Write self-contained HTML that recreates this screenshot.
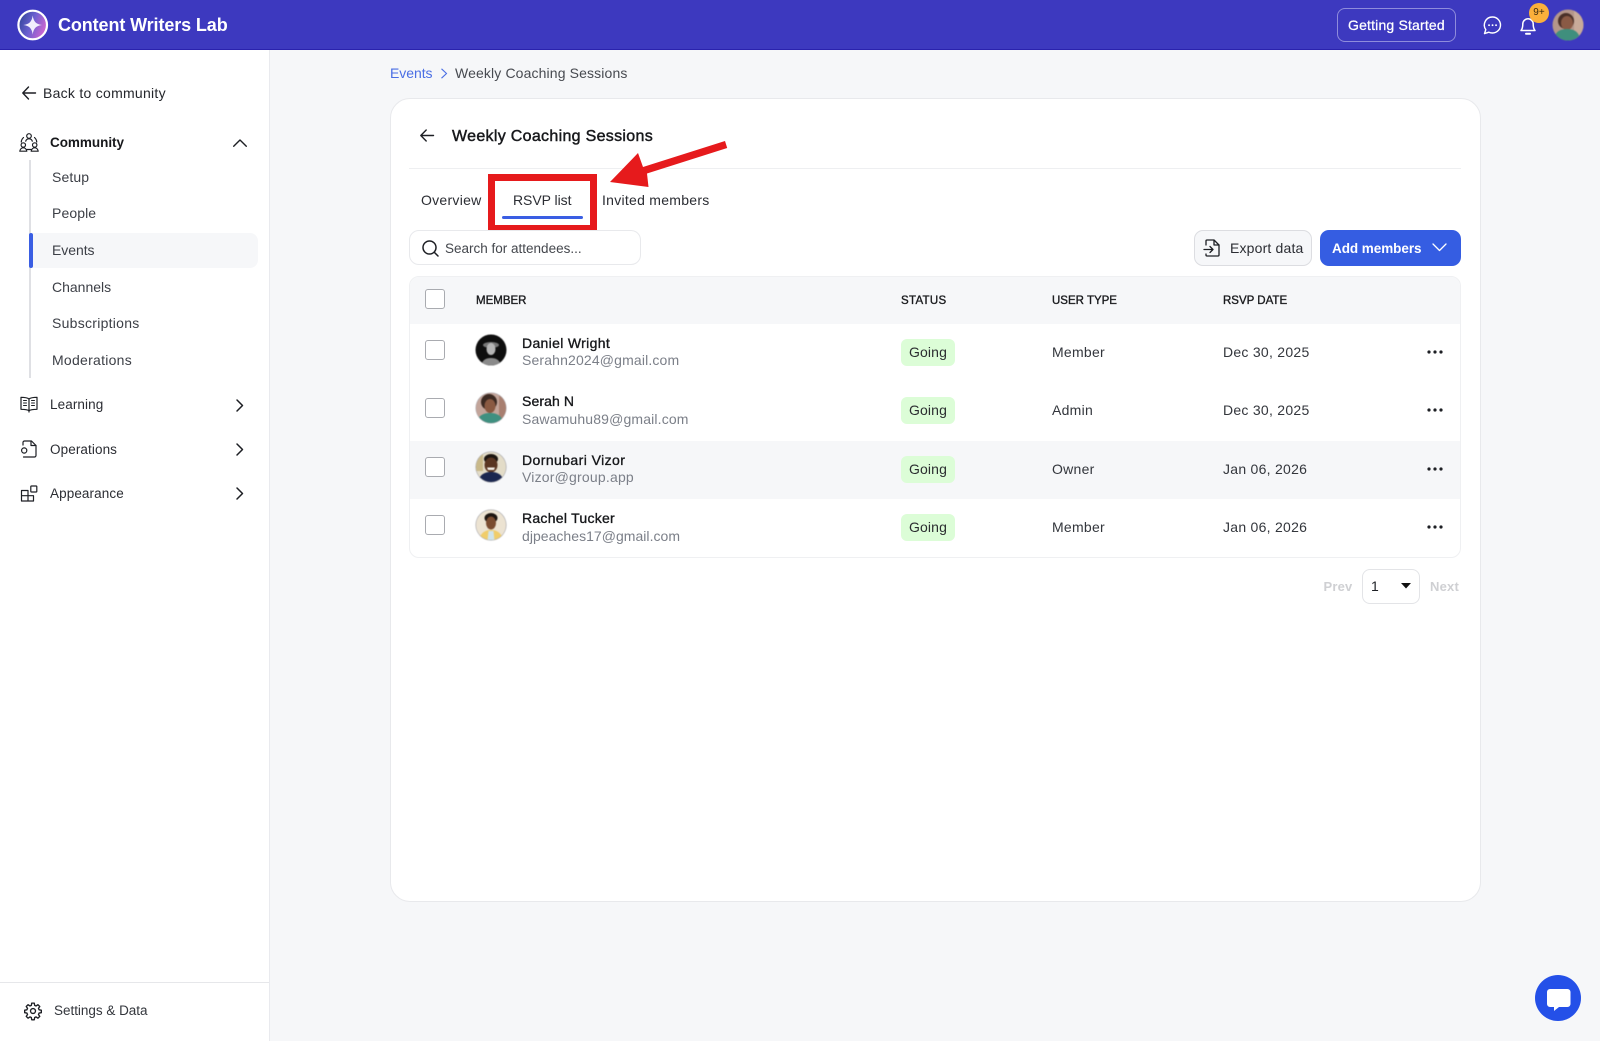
<!DOCTYPE html>
<html lang="en"><head><meta charset="utf-8"><title>Weekly Coaching Sessions</title>
<style>
*{box-sizing:border-box}
html,body{margin:0;padding:0;width:1600px;height:1041px;overflow:hidden;background:#f6f7f9;font-family:"Liberation Sans",sans-serif;color:#24262b}
.a{position:absolute}
.t{position:absolute;white-space:nowrap;line-height:20px;font-size:14px;letter-spacing:.27px}
svg{position:absolute;overflow:visible}
.ic{fill:none;stroke:#1d1f24;stroke-width:1.4;stroke-linecap:round;stroke-linejoin:round}
.cb{position:absolute;left:425px;width:20px;height:20px;border:1.6px solid #a9abb0;border-radius:3px;background:#fff}
.go{position:absolute;left:901px;width:54px;height:27px;background:#dcfdd7;border-radius:6px;font-size:14px;line-height:27px;text-align:center;letter-spacing:.15px;color:#2b2d30}
.nm{color:#17181b;-webkit-text-stroke:.35px #17181b}
.em{color:#7b7f88;letter-spacing:.15px}
.th{font-size:11.5px;color:#1a1b1e;-webkit-text-stroke:.35px #1a1b1e;letter-spacing:0}
.nav{color:#3c3f46}
.side{color:#2b2d33;font-size:13.5px;letter-spacing:.1px}
.av{filter:blur(.5px)}
</style></head><body>

<!-- header -->
<div class="a" style="left:0;top:0;width:1600px;height:50px;background:#3d39bf;border-bottom:1px solid #2a22ad"></div>
<svg style="left:0;top:0" width="70" height="50">
<defs><linearGradient id="lg" x1="0" y1="0" x2="1" y2=".4"><stop offset="0" stop-color="#27408f"/><stop offset=".55" stop-color="#6a5fd0"/><stop offset="1" stop-color="#c565d0"/></linearGradient></defs>
<circle cx="32.7" cy="25" r="14.3" fill="url(#lg)" stroke="#fff" stroke-width="2.2"/>
<path d="M32.7 15.5C33.5 21.5 36 24.2 42 25 36 25.8 33.5 28.5 32.7 34.5 31.9 28.5 29.4 25.8 23.4 25 29.4 24.2 31.9 21.5 32.7 15.500Z" fill="#f1eefc"/>
</svg>
<div class="t" style="left:58px;top:15px;font-size:18px;font-weight:700;color:#fff;letter-spacing:-.11px">Content Writers Lab</div>
<div class="a" style="left:1337px;top:8px;width:119px;height:34px;border:1px solid #8f8cdc;border-radius:8px"></div>
<div class="t" style="left:1348px;top:15px;color:#fff;font-size:14px;-webkit-text-stroke:.25px #fff;letter-spacing:.18px">Getting Started</div>
<svg style="left:1482px;top:15px" width="22" height="22" fill="none" stroke="#fff" stroke-width="1.4" stroke-linecap="round" stroke-linejoin="round"><path d="M10.500 2a8 8 0 0 1 0 16 8.200 8.200 0 0 1-3.600-.8L2.500 18.600l1.300-4A8 8 0 0 1 10.500 2Z"/><path d="M7 10.200h.1M10.500 10.200h.1M14 10.200h.1" stroke-width="1.800"/></svg>
<svg style="left:1519px;top:15px" width="18" height="22" fill="none" stroke="#fff" stroke-width="1.5" stroke-linecap="round" stroke-linejoin="round"><path d="M2 15.500c1.300-1.500 1.800-3 1.800-6.500a5.200 5.200 0 0 1 10.400 0c0 3.500.5 5 1.800 6.500Z"/><path d="M7 18.800h4" stroke-width="2"/></svg>
<div class="a" style="left:1529px;top:3px;width:20px;height:20px;border-radius:50%;background:#fbb03b;color:#3a2a10;font-size:10px;line-height:20px;text-align:center">9+</div>
<svg class="av" style="left:1552px;top:9px" width="32" height="32"><defs><clipPath id="c0"><circle cx="16" cy="16" r="15.500"/></clipPath></defs><g clip-path="url(#c0)"><rect width="32" height="32" fill="#b4968a"/><rect x="22" width="10" height="32" fill="#c8ab9a"/><circle cx="14" cy="12" r="8" fill="#4a3028"/><ellipse cx="15" cy="14" rx="6" ry="7" fill="#8a5a45"/><path d="M2 32c0-9 6-12 13-12s13 3 13 12Z" fill="#3f8f7d"/></g></svg>

<!-- sidebar -->
<div class="a" style="left:0;top:50px;width:270px;height:991px;background:#fff;border-right:1px solid #e9eaee"></div>
<svg class="ic" style="left:22px;top:86px" width="14" height="14" viewBox="0 0 14 14"><path d="M13.500 7H1M6.500 1 .8 7l5.700 6"/></svg>
<div class="t" style="left:43px;top:83px">Back to community</div>

<svg class="ic" style="left:19px;top:132px;stroke-width:1.200" width="20" height="21" viewBox="0 0 20 21"><circle cx="10" cy="4" r="2.300"/><path d="M6.700 9.200c.4-1.500 1.700-2.400 3.300-2.400s2.900.9 3.300 2.400"/><circle cx="4.300" cy="13" r="2.200"/><circle cx="15.700" cy="13" r="2.200"/><path d="M.8 19.200c.3-2 1.700-3.400 3.500-3.400s3.200 1.400 3.500 3.400H.8ZM12.200 19.200c.3-2 1.700-3.400 3.500-3.400s3.200 1.400 3.500 3.400h-7Z"/><path d="M4.500 5.500C3 7 2.300 8.500 2.300 10M15.500 5.500c1.500 1.500 2.200 3 2.200 4.500M8 17.500h4"/></svg>
<div class="t" style="left:50px;top:133px;font-weight:700;color:#17181b;font-size:13.500px;letter-spacing:-.03px">Community</div>
<svg class="ic" style="left:233px;top:139px" width="14" height="8" viewBox="0 0 14 8"><path d="M.7 7.300 7 1l6.300 6.300"/></svg>

<div class="a" style="left:29px;top:160px;width:2px;height:218px;background:#dfe0e4"></div>
<div class="a" style="left:33px;top:233px;width:225px;height:35px;background:#f6f7f9;border-radius:0 8px 8px 0"></div>
<div class="a" style="left:28.500px;top:233px;width:4.500px;height:35px;background:#3a5ee3;border-radius:2px"></div>
<div class="t nav" style="left:52px;top:167px;letter-spacing:.1px">Setup</div>
<div class="t nav" style="left:52px;top:203px;letter-spacing:.1px">People</div>
<div class="t nav" style="left:52px;top:240px;letter-spacing:-.05px">Events</div>
<div class="t nav" style="left:52px;top:277px;letter-spacing:0">Channels</div>
<div class="t nav" style="left:52px;top:313px">Subscriptions</div>
<div class="t nav" style="left:52px;top:350px">Moderations</div>

<svg class="ic" style="left:20px;top:396px;stroke-width:1.200" width="18" height="17" viewBox="0 0 18 17"><path d="M9 3C7.500 1.700 4 1.300 1 1.300v12c3 0 6.500.3 8 1.500 1.500-1.200 5-1.500 8-1.500v-12C14 1.300 10.500 1.700 9 3ZM9 3v13"/><path d="M3.500 4.500h3M3.500 7h3M3.500 9.500h3M11.500 4.500h3M11.500 7h3M11.500 9.500h3" stroke-width="1"/></svg>
<div class="t side" style="left:50px;top:395px">Learning</div>
<svg class="ic" style="left:236px;top:399px;stroke-width:1.500" width="8" height="13" viewBox="0 0 8 13"><path d="M1 1l5.500 5.500L1 12"/></svg>

<svg class="ic" style="left:20px;top:440px;stroke-width:1.200" width="18" height="18" viewBox="0 0 18 18"><path d="M3 5V2.500C3 1.700 3.700 1 4.500 1h7L16 5.500v10c0 .8-.7 1.500-1.500 1.500H3.500"/><path d="M11 1.200V5.500h5"/><circle cx="4.200" cy="10.500" r="2.600"/></svg>
<div class="t side" style="left:50px;top:439.500px">Operations</div>
<svg class="ic" style="left:236px;top:443px;stroke-width:1.500" width="8" height="13" viewBox="0 0 8 13"><path d="M1 1l5.500 5.500L1 12"/></svg>

<svg class="ic" style="left:20px;top:485px;stroke-width:1.200" width="18" height="17" viewBox="0 0 18 17"><path d="M1.500 5.500h6.500V16H1.500ZM1.500 10.700h12V16H8"/><rect x="10.800" y="1" width="6" height="6" rx=".7"/></svg>
<div class="t side" style="left:50px;top:484px">Appearance</div>
<svg class="ic" style="left:236px;top:487px;stroke-width:1.500" width="8" height="13" viewBox="0 0 8 13"><path d="M1 1l5.500 5.500L1 12"/></svg>

<div class="a" style="left:0;top:982px;width:269px;height:1px;background:#e6e7ea"></div>
<svg class="ic" style="left:24px;top:1002px;stroke-width:1.800" width="18" height="18" viewBox="0 0 24 24"><circle cx="12" cy="12" r="3.300"/><path d="M10.300 1.500h3.400l.5 3 1.900.8 2.500-1.700 2.400 2.400-1.700 2.500.8 1.900 3 .5v3.400l-3 .5-.8 1.900 1.700 2.500-2.400 2.400-2.500-1.700-1.900.8-.5 3h-3.400l-.5-3-1.900-.8-2.500 1.700-2.400-2.400 1.700-2.500-.8-1.900-3-.5v-3.400l3-.5.8-1.900-1.700-2.500 2.400-2.400 2.500 1.700 1.900-.8Z"/></svg>
<div class="t" style="left:54px;top:1001px;color:#33363c;font-size:13.500px;letter-spacing:-.02px">Settings &amp; Data</div>

<!-- breadcrumb -->
<div class="t" style="left:390px;top:63px;color:#4a6ee4;letter-spacing:-.05px">Events</div>
<svg style="left:441px;top:68px" width="7" height="11" fill="none" stroke="#4a6ee4" stroke-width="1.100"><path d="M.5 .8 5.500 5.500 .5 10.200"/></svg>
<div class="t" style="left:455px;top:63px;color:#474a50;letter-spacing:.13px">Weekly Coaching Sessions</div>

<!-- card -->
<div class="a" style="left:390px;top:98px;width:1091px;height:804px;background:#fff;border:1px solid #e8e9ec;border-radius:20px"></div>
<svg class="ic" style="left:420px;top:129px" width="14" height="13" viewBox="0 0 14 13"><path d="M13.500 6.500H1M6.200 1 .8 6.500 6.200 12"/></svg>
<div class="t" style="left:452px;top:126.500px;font-size:16px;color:#17181b;-webkit-text-stroke:.45px #17181b;letter-spacing:.31px">Weekly Coaching Sessions</div>
<div class="a" style="left:409px;top:168px;width:1052px;height:1px;background:#eeeff1"></div>

<div class="t" style="left:421px;top:190px;color:#2b2d33">Overview</div>
<div class="t" style="left:513px;top:190px;color:#2b2d33;letter-spacing:-.05px">RSVP list</div>
<div class="t" style="left:602px;top:190px;color:#2b2d33">Invited members</div>
<div class="a" style="left:502px;top:216px;width:81px;height:3px;border-radius:2px;background:#3a5ee3"></div>
<div class="a" style="left:488px;top:174px;width:109px;height:58px;border:7px solid #e61a1c"></div>
<svg style="left:600px;top:135px" width="135" height="60"><path d="M10 47 38 18 43 32 125 6 127.200 13 47 38.500 48.500 52Z" fill="#e61a1c"/></svg>

<!-- toolbar -->
<div class="a" style="left:409px;top:230px;width:232px;height:35px;background:#fff;border:1px solid #e8e9ec;border-radius:10px"></div>
<svg class="ic" style="left:422px;top:240px;stroke-width:1.500" width="17" height="17" viewBox="0 0 17 17"><circle cx="7.500" cy="7.500" r="6.500"/><path d="M12.500 12.500 16 16"/></svg>
<div class="t" style="left:445px;top:239px;color:#44474d;font-size:13.500px;letter-spacing:0">Search for attendees...</div>
<div class="a" style="left:1194px;top:230px;width:118px;height:36px;background:#f6f7f9;border:1px solid #dcdde1;border-radius:9px"></div>
<svg class="ic" style="left:1203px;top:239px;stroke-width:1.300" width="18" height="18" viewBox="0 0 18 18"><path d="M3 6V2c0-.6.500-1 1-1h7l5 5v10c0 .6-.5 1-1 1H4c-.5 0-1-.4-1-1v-1"/><path d="M11 1.200V6h5M1 10.500h9M7 7.500l3 3-3 3"/></svg>
<div class="t" style="left:1230px;top:238px;color:#2b2d33;letter-spacing:.17px">Export data</div>
<div class="a" style="left:1320px;top:230px;width:141px;height:36px;background:#355de2;border-radius:9px"></div>
<div class="t" style="left:1332px;top:239px;color:#fff;font-weight:700;font-size:13.500px;letter-spacing:-.05px">Add members</div>
<svg style="left:1432px;top:243px" width="15" height="9" fill="none" stroke="#fff" stroke-width="1.300" stroke-linecap="round" stroke-linejoin="round"><path d="M1 1l6.500 6.500L14 1"/></svg>

<!-- table -->
<div class="a" style="left:409px;top:276px;width:1052px;height:282px;background:#fff;border:1px solid #eff0f2;border-radius:10px;overflow:hidden">
<div class="a" style="left:0;top:0;width:100%;height:47px;background:#f6f7f9"></div>
<div class="a" style="left:0;top:164px;width:100%;height:58px;background:#f6f7f9"></div>
</div>
<div class="t th" style="left:476px;top:291px">MEMBER</div>
<div class="t th" style="left:901px;top:291px;letter-spacing:.3px">STATUS</div>
<div class="t th" style="left:1052px;top:291px">USER TYPE</div>
<div class="t th" style="left:1223px;top:291px">RSVP DATE</div>
<div class="cb" style="top:289px"></div>
<div class="cb" style="top:340px"></div>
<div class="cb" style="top:398px"></div>
<div class="cb" style="top:457px"></div>
<div class="cb" style="top:515px"></div>

<svg class="av" style="left:475px;top:334px" width="32" height="32"><defs><clipPath id="c1"><circle cx="16" cy="16" r="15.500"/></clipPath></defs><g clip-path="url(#c1)"><rect width="32" height="32" fill="#0e0e0e"/><ellipse cx="16" cy="11" rx="8" ry="3" fill="#777"/><ellipse cx="16" cy="15" rx="4.500" ry="6" fill="#b5b5b5"/><path d="M6 32c1-6 5-8 10-8s9 2 10 8Z" fill="#8a8a8a"/></g></svg>
<svg class="av" style="left:475px;top:392px" width="32" height="32"><defs><clipPath id="c2"><circle cx="16" cy="16" r="15"/></clipPath></defs><circle cx="16" cy="16" r="15.500" fill="#a9a6ad"/><g clip-path="url(#c2)"><rect width="32" height="32" fill="#c3a59a"/><rect x="24" width="8" height="32" fill="#a87f70"/><ellipse cx="14" cy="10" rx="8" ry="8" fill="#3c2a22"/><ellipse cx="15" cy="14" rx="5.500" ry="7" fill="#8a5a42"/><path d="M2 32c0-8 6-11 13-11s13 3 13 11Z" fill="#3f9080"/></g></svg>
<svg class="av" style="left:475px;top:451px" width="32" height="32"><defs><clipPath id="c3"><circle cx="16" cy="16" r="15"/></clipPath></defs><circle cx="16" cy="16" r="15.500" fill="#9a9aa0"/><g clip-path="url(#c3)"><rect width="32" height="32" fill="#e3dcc8"/><rect width="8" height="20" fill="#c9b98a"/><ellipse cx="16" cy="8" rx="7" ry="5" fill="#1c1510"/><ellipse cx="16" cy="14" rx="6.500" ry="7.500" fill="#5a3622"/><path d="M12 16.500h8l-1 2.500h-6Z" fill="#f4f0e8"/><path d="M3 32c1-8 6-11 13-11s12 3 13 11Z" fill="#1b2750"/></g></svg>
<svg class="av" style="left:475px;top:509px" width="32" height="32"><defs><clipPath id="c4"><circle cx="16" cy="16" r="15"/></clipPath></defs><circle cx="16" cy="16" r="15.500" fill="#9a9aa0"/><g clip-path="url(#c4)"><rect width="32" height="32" fill="#ece3d2"/><ellipse cx="16" cy="9" rx="6.500" ry="5" fill="#1c1510"/><ellipse cx="16" cy="14" rx="5" ry="6.500" fill="#7a4c30"/><path d="M4 32c1-8 6-11 12-11s11 3 12 11Z" fill="#f0cd6a"/><path d="M12.500 32l1-10h5l1 10Z" fill="#cfe4ec"/></g></svg>

<div class="t nm" style="left:522px;top:333px;letter-spacing:.33px">Daniel Wright</div>
<div class="t em" style="left:522px;top:350px">Serahn2024@gmail.com</div>
<div class="t nm" style="left:522px;top:391px;letter-spacing:.1px">Serah N</div>
<div class="t em" style="left:522px;top:409px">Sawamuhu89@gmail.com</div>
<div class="t nm" style="left:522px;top:450px;letter-spacing:.42px">Dornubari Vizor</div>
<div class="t em" style="left:522px;top:467px;letter-spacing:.2px">Vizor@group.app</div>
<div class="t nm" style="left:522px;top:508px">Rachel Tucker</div>
<div class="t em" style="left:522px;top:526px;letter-spacing:.03px">djpeaches17@gmail.com</div>

<div class="go" style="top:339px">Going</div>
<div class="go" style="top:397px">Going</div>
<div class="go" style="top:456px">Going</div>
<div class="go" style="top:514px">Going</div>

<div class="t" style="left:1052px;top:342px;color:#33363c">Member</div>
<div class="t" style="left:1052px;top:400px;color:#33363c">Admin</div>
<div class="t" style="left:1052px;top:459px;color:#33363c">Owner</div>
<div class="t" style="left:1052px;top:517px;color:#33363c">Member</div>
<div class="t" style="left:1223px;top:342px;color:#33363c">Dec 30, 2025</div>
<div class="t" style="left:1223px;top:400px;color:#33363c">Dec 30, 2025</div>
<div class="t" style="left:1223px;top:459px;color:#33363c">Jan 06, 2026</div>
<div class="t" style="left:1223px;top:517px;color:#33363c">Jan 06, 2026</div>

<svg style="left:1427px;top:350px" width="16" height="4" fill="#1d1f24"><circle cx="2" cy="2" r="1.600"/><circle cx="8" cy="2" r="1.600"/><circle cx="14" cy="2" r="1.600"/></svg>
<svg style="left:1427px;top:408px" width="16" height="4" fill="#1d1f24"><circle cx="2" cy="2" r="1.600"/><circle cx="8" cy="2" r="1.600"/><circle cx="14" cy="2" r="1.600"/></svg>
<svg style="left:1427px;top:467px" width="16" height="4" fill="#1d1f24"><circle cx="2" cy="2" r="1.600"/><circle cx="8" cy="2" r="1.600"/><circle cx="14" cy="2" r="1.600"/></svg>
<svg style="left:1427px;top:525px" width="16" height="4" fill="#1d1f24"><circle cx="2" cy="2" r="1.600"/><circle cx="8" cy="2" r="1.600"/><circle cx="14" cy="2" r="1.600"/></svg>

<!-- pagination -->
<div class="t" style="left:1323.500px;top:577px;font-size:13px;font-weight:700;color:#cfd0d3;letter-spacing:.2px">Prev</div>
<div class="a" style="left:1362px;top:569px;width:58px;height:35px;background:#fff;border:1px solid #e3e4e7;border-radius:8px"></div>
<div class="t" style="left:1371px;top:576px;color:#1d1f24">1</div>
<svg style="left:1401px;top:583px" width="10" height="6" fill="#111"><path d="M0 0h10L5 5.500Z"/></svg>
<div class="t" style="left:1430px;top:577px;font-size:13px;font-weight:700;color:#cfd0d3;letter-spacing:.2px">Next</div>

<!-- chat fab -->
<div class="a" style="left:1535px;top:975px;width:46px;height:46px;border-radius:50%;background:#2450e8"></div>
<svg style="left:1547px;top:989px" width="24" height="23" fill="#fff"><path d="M3 0h17.500a3 3 0 0 1 3 3v12a3 3 0 0 1-3 3H12l-5 4v-4H3a3 3 0 0 1-3-3V3a3 3 0 0 1 3-3Z"/></svg>
</body></html>
